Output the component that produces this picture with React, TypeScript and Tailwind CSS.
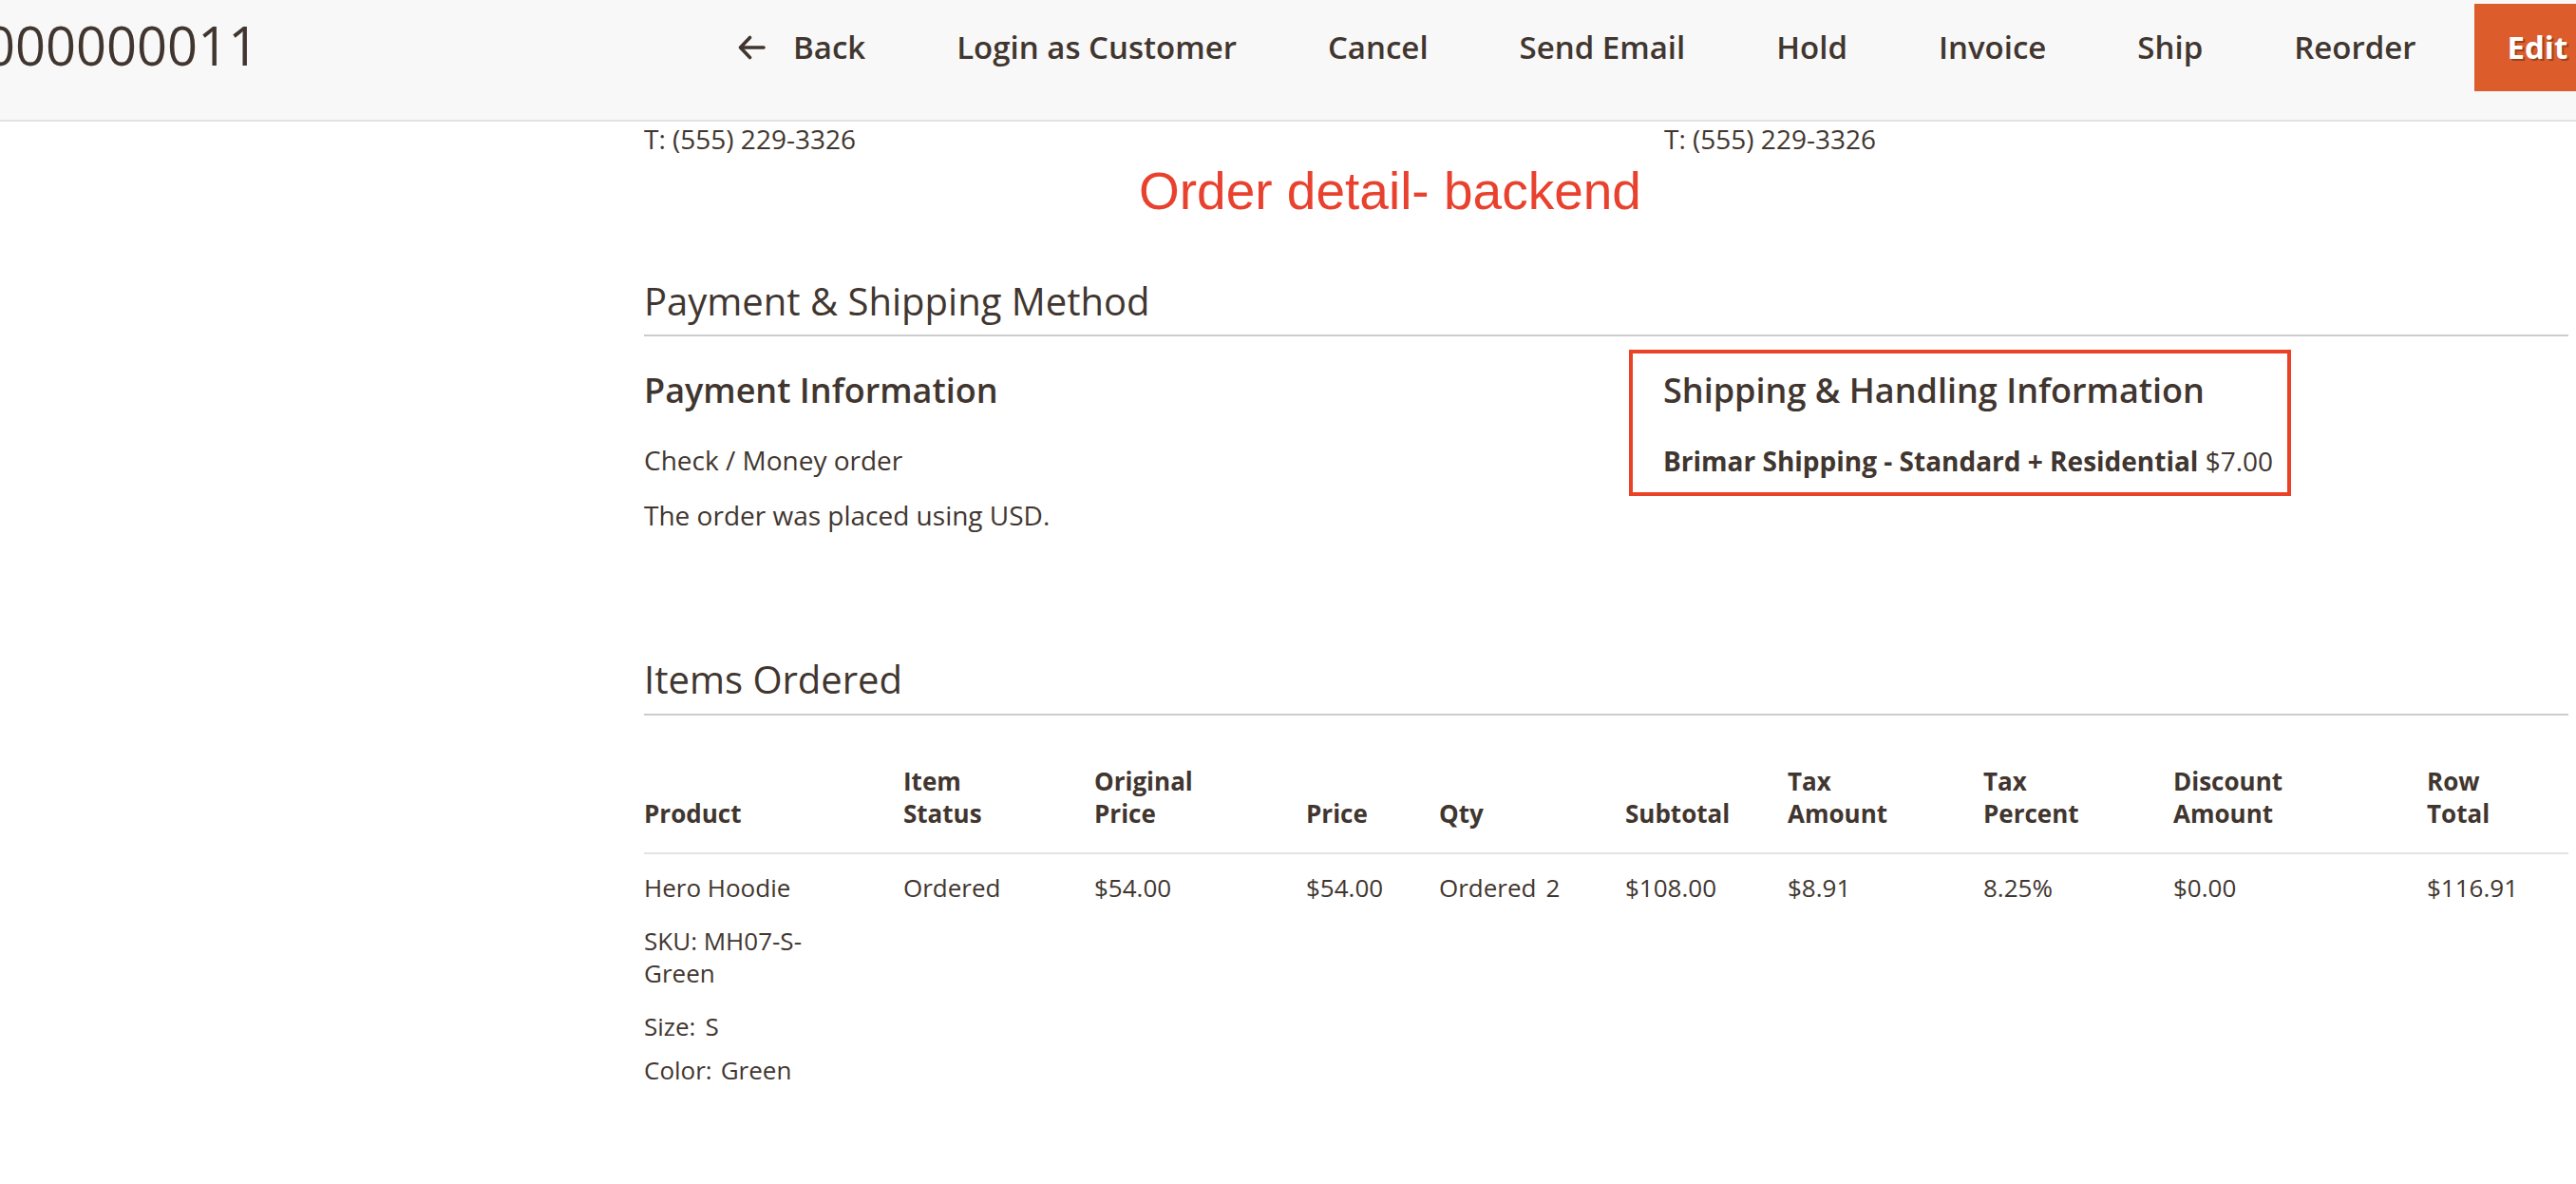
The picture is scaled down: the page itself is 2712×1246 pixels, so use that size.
import React from "react";

const navItems = ["Login as Customer", "Cancel", "Send Email", "Hold", "Invoice", "Ship", "Reorder"];

const cols = [273, 201, 223, 140, 196, 171, 206, 200, 267, 149];

export default function App() {
  return (
    <div className="w-[2712px] h-[1246px] overflow-hidden bg-white font-['Open_Sans',sans-serif] text-[#41362f]">
      <header className="h-[128px] bg-[#f8f8f8] border-b-2 border-[#e3e3e3] flex items-start pt-[4px] overflow-hidden">
        <div className="w-[742px] shrink-0 h-[92px] overflow-hidden">
          <h1 className="ml-[-16px] mt-[11px] text-[56px] leading-[64px] font-normal whitespace-nowrap">000000011</h1>
        </div>
        <nav className="flex gap-[26px] h-[92px] items-stretch whitespace-nowrap text-[33px] leading-[40px] font-semibold">
          <button className="px-[35px] flex items-center">
            <svg width="29" height="26" viewBox="0 0 29 26" className="mr-[29px]" fill="none" stroke="#41362f" strokeWidth="3.6" strokeLinecap="round" strokeLinejoin="round">
              <path d="M27 13 H3" />
              <path d="M12.5 2.5 L2.5 13 L12.5 23.5" />
            </svg>
            <span>Back</span>
          </button>
          {navItems.map((t) => (
            <button key={t} className="px-[35px] flex items-center">
              {t}
            </button>
          ))}
          <button className="px-[35px] flex items-center bg-[#dc5c2b] text-white font-bold [text-shadow:2px_2px_0_rgba(0,0,0,0.3)]">
            Edit
          </button>
        </nav>
      </header>

      <main className="pl-[678px] pr-[8px]">
        <div className="grid grid-cols-[1074px_1fr] text-[28px] leading-[34px] pt-px">
          <div>T: (555) 229-3326</div>
          <div>T: (555) 229-3326</div>
        </div>

        <div className="mt-[11px] ml-[521px] font-['Liberation_Sans',Arial,sans-serif] text-[55px] leading-[55px] text-[#e8412e] whitespace-nowrap">
          Order detail- backend
        </div>

        <h2 className="mt-[64px] text-[40px] leading-[48px] font-normal pb-[11px] border-b-2 border-[#cccccc]">
          Payment &amp; Shipping Method
        </h2>

        <div className="grid grid-cols-[1074px_1fr] text-[28px] leading-[34px]">
          <div>
            <h3 className="mt-[35px] text-[36px] leading-[44px] font-semibold">Payment Information</h3>
            <p className="mt-[34px]">Check / Money order</p>
            <p className="mt-[24px]">The order was placed using USD.</p>
          </div>
          <div>
            <div className="mt-[14px] ml-[-37px] w-[697px] border-4 border-[#ea4226] pt-[17px] pl-[32px] pb-[16px]">
              <h3 className="text-[36px] leading-[44px] font-semibold whitespace-nowrap">Shipping &amp; Handling Information</h3>
              <p className="mt-[35px] whitespace-nowrap">
                <span className="font-bold">Brimar Shipping - Standard + Residential</span> $7.00
              </p>
            </div>
          </div>
        </div>

        <h2 className="mt-[132px] text-[40px] leading-[48px] font-normal pb-[12px] border-b-2 border-[#cccccc]">
          Items Ordered
        </h2>

        <table className="mt-[28px] w-full table-fixed border-separate border-spacing-0 text-[26px] leading-[34px]">
          <colgroup>
            {cols.map((w, i) => (
              <col key={i} style={{ width: w }} />
            ))}
          </colgroup>
          <thead>
            <tr>
              {[
                ["Product"],
                ["Item", "Status"],
                ["Original", "Price"],
                ["Price"],
                ["Qty"],
                ["Subtotal"],
                ["Tax", "Amount"],
                ["Tax", "Percent"],
                ["Discount", "Amount"],
                ["Row", "Total"],
              ].map((lines, i) => (
                <th
                  key={i}
                  className="text-left align-bottom font-bold pt-[24px] pb-[24px] border-b-2 border-[#e3e3e3] whitespace-nowrap"
                >
                  {lines.map((l, j) => (
                    <div key={j}>{l}</div>
                  ))}
                </th>
              ))}
            </tr>
          </thead>
          <tbody>
            <tr>
              <td className="align-top pt-[18px] pr-[40px]">
                <div>Hero Hoodie</div>
                <div className="mt-[22px]">SKU: MH07-S-Green</div>
                <div className="mt-[22px]">Size:<span className="ml-[10px]">S</span></div>
                <div className="mt-[12px]">Color:<span className="ml-[9px]">Green</span></div>
              </td>
              <td className="align-top pt-[18px]">Ordered</td>
              <td className="align-top pt-[18px]">$54.00</td>
              <td className="align-top pt-[18px]">$54.00</td>
              <td className="align-top pt-[18px] whitespace-nowrap">
                Ordered<span className="ml-[10px]">2</span>
              </td>
              <td className="align-top pt-[18px]">$108.00</td>
              <td className="align-top pt-[18px]">$8.91</td>
              <td className="align-top pt-[18px]">8.25%</td>
              <td className="align-top pt-[18px]">$0.00</td>
              <td className="align-top pt-[18px]">$116.91</td>
            </tr>
          </tbody>
        </table>
      </main>
    </div>
  );
}
